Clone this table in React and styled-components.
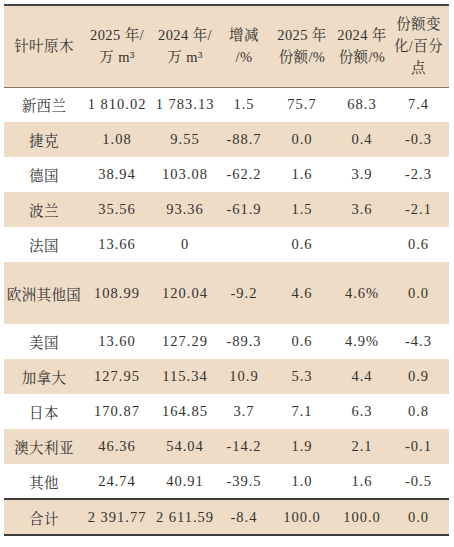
import React from 'react';
import styled, { createGlobalStyle } from 'styled-components';

const GlobalStyle = createGlobalStyle`
  html, body {
    margin: 0;
    padding: 0;
    background: #ffffff;
  }
  body {
    font-family: "Liberation Serif", "Noto Serif CJK SC", "Noto Sans CJK SC", serif;
    color: #333333;
  }
`;

const COLS = [80, 66, 70, 48, 68, 52, 61];

const rows = [
  { name: '新西兰', v: ['1 810.02', '1 783.13', '1.5', '75.7', '68.3', '7.4'] },
  { name: '捷克', v: ['1.08', '9.55', '-88.7', '0.0', '0.4', '-0.3'], shade: true },
  { name: '德国', v: ['38.94', '103.08', '-62.2', '1.6', '3.9', '-2.3'] },
  { name: '波兰', v: ['35.56', '93.36', '-61.9', '1.5', '3.6', '-2.1'], shade: true },
  { name: '法国', v: ['13.66', '0', '', '0.6', '', '0.6'] },
  { name: '欧洲其他国', v: ['108.99', '120.04', '-9.2', '4.6', '4.6%', '0.0'], shade: true, tall: true },
  { name: '美国', v: ['13.60', '127.29', '-89.3', '0.6', '4.9%', '-4.3'] },
  { name: '加拿大', v: ['127.95', '115.34', '10.9', '5.3', '4.4', '0.9'], shade: true },
  { name: '日本', v: ['170.87', '164.85', '3.7', '7.1', '6.3', '0.8'] },
  { name: '澳大利亚', v: ['46.36', '54.04', '-14.2', '1.9', '2.1', '-0.1'], shade: true },
  { name: '其他', v: ['24.74', '40.91', '-39.5', '1.0', '1.6', '-0.5'] },
];

const total = { name: '合计', v: ['2 391.77', '2 611.59', '-8.4', '100.0', '100.0', '0.0'] };

const Wrap = styled.div`
  padding: 4px 0 0 4px;
`;

const Table = styled.table`
  width: 445px;
  border-collapse: collapse;
  table-layout: fixed;
  font-size: 14.5px;
`;

const HeadRow = styled.tr`
  background: #eedcc6;
  border-top: 2px solid #444444;
  border-bottom: 1px solid #85766b;
  height: 82px;
`;

const HeadCell = styled.th`
  font-weight: normal;
  text-align: center;
  line-height: 22px;
  padding: 0;
  white-space: nowrap;
  letter-spacing: 0.4px;
`;

const Row = styled.tr`
  background: ${p => (p.$shade ? '#eedcc6' : '#ffffff')};
  height: ${p => (p.$tall ? '62px' : '35px')};
`;

const TotalRow = styled.tr`
  background: #eedcc6;
  border-top: 2px solid #3d3d3d;
  border-bottom: 2px solid #3d3d3d;
  height: 36px;
`;

const Cell = styled.td`
  text-align: center;
  padding: 0;
  white-space: nowrap;
  letter-spacing: ${p => (p.$num ? '1px' : '0.4px')};
`;

export default function App() {
  return (
    <Wrap>
      <GlobalStyle />
      <Table>
        <colgroup>
          {COLS.map((w, i) => (
            <col key={i} style={{ width: w }} />
          ))}
        </colgroup>
        <thead>
          <HeadRow>
            <HeadCell>针叶原木</HeadCell>
            <HeadCell>2025 年/<br />万 m³</HeadCell>
            <HeadCell>2024 年/<br />万 m³</HeadCell>
            <HeadCell>增减<br />/%</HeadCell>
            <HeadCell>2025 年<br />份额/%</HeadCell>
            <HeadCell>2024 年<br />份额/%</HeadCell>
            <HeadCell>份额变<br />化/百分<br />点</HeadCell>
          </HeadRow>
        </thead>
        <tbody>
          {rows.map(r => (
            <Row key={r.name} $shade={r.shade} $tall={r.tall}>
              <Cell>{r.name}</Cell>
              {r.v.map((x, i) => (
                <Cell key={i} $num>{x}</Cell>
              ))}
            </Row>
          ))}
          <TotalRow>
            <Cell>{total.name}</Cell>
            {total.v.map((x, i) => (
              <Cell key={i} $num>{x}</Cell>
            ))}
          </TotalRow>
        </tbody>
      </Table>
    </Wrap>
  );
}
